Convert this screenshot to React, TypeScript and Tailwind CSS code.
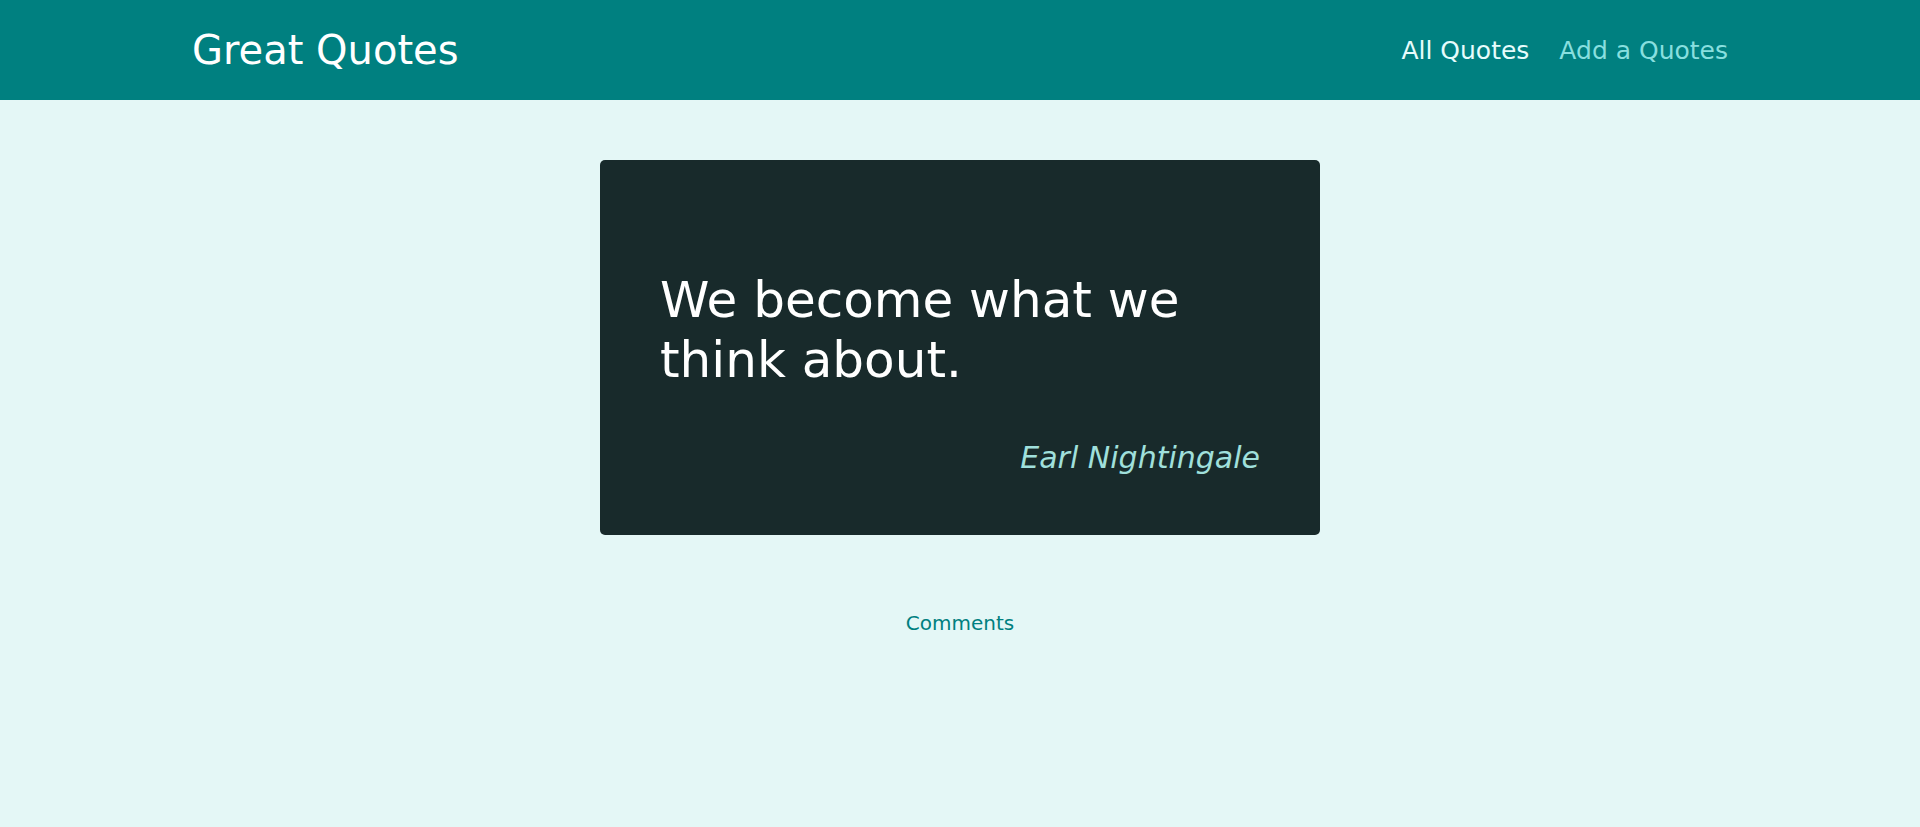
export default function App() {
  return (
    <div className="min-h-screen bg-[#e4f7f6] font-['DejaVu_Sans',sans-serif]">
      {/* header */}
      <header className="h-[100px] bg-[#008080] flex items-center justify-between px-[10%]">
        <div className="text-[40px] leading-[normal] text-white">Great Quotes</div>
        <nav className="flex items-center gap-[30px] text-[25px] leading-[normal]">
          <a className="text-[#e6fcfc]">All Quotes</a>
          <a className="text-[#88dfdf]">Add a Quotes</a>
        </nav>
      </header>

      <main>
        <figure className="w-[720px] mx-auto mt-[60px] bg-[#182a2b] rounded-[5px] p-[60px] text-white">
          <p className="text-[50px] leading-[60px] my-[50px]">
            We become what we think about.
          </p>
          <figcaption className="text-[30px] leading-[normal] italic text-right text-[#a0e0dc]">
            Earl Nightingale
          </figcaption>
        </figure>

        <div className="mt-[76px] text-center">
          <a className="text-[20px] leading-[normal] text-[#008080]">Comments</a>
        </div>
      </main>
    </div>
  )
}
